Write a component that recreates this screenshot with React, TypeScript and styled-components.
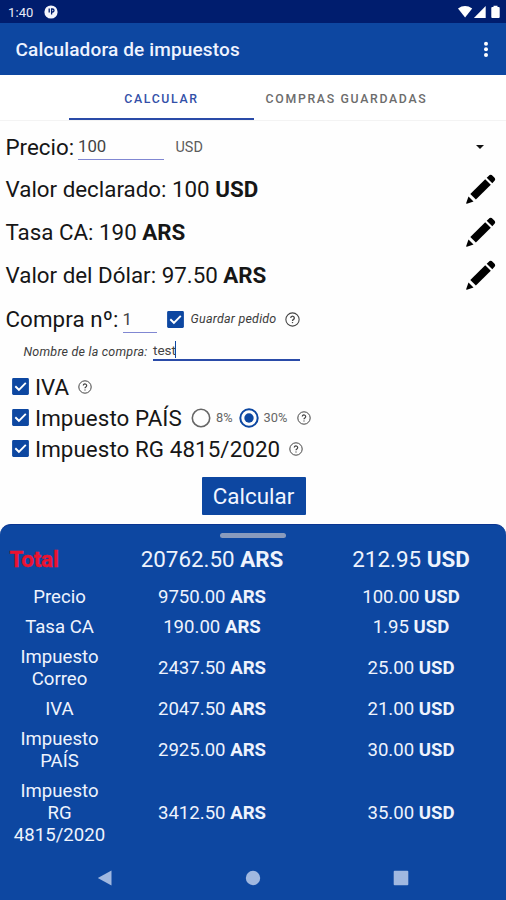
import React from "react";
import styled, { createGlobalStyle } from "styled-components";

const BLUE = "#0d47a1";

const GlobalStyle = createGlobalStyle`
  *, *::before, *::after { box-sizing: border-box; }
  html, body { margin: 0; padding: 0; background: #fff; }
  body { font-family: Roboto, "Liberation Sans", sans-serif; color: #161616; }
  svg { display: block; flex: none; }
`;

const Screen = styled.div`
  width: 506px;
  height: 900px;
  display: flex;
  flex-direction: column;
  overflow: hidden;
  background: #fefefe;
`;

const StatusBar = styled.header`
  height: 23px;
  flex: none;
  padding: 1px 5px 0 8px;
  display: flex;
  align-items: center;
  background: #001d6e;
  color: #e8ebf6;
  font-size: 13px;
`;

const Clock = styled.span`
  width: 36px;
  letter-spacing: 0.1px;
`;

const StatusIcons = styled.div`
  margin-left: auto;
  display: flex;
  align-items: center;
`;

const AppBar = styled.div`
  height: 52px;
  flex: none;
  padding: 1px 13px 0 15.5px;
  display: flex;
  align-items: center;
  justify-content: space-between;
  background: ${BLUE};
  color: #eef3ff;
`;

const Title = styled.h1`
  margin: 0;
  font-size: 19px;
  font-weight: 500;
  letter-spacing: 0.15px;
`;

const Tabs = styled.nav`
  height: 46px;
  flex: none;
  padding-left: 69px;
  display: flex;
  background: #fff;
  border-bottom: 1px solid #f3f3f3;
`;

const Tab = styled.div<{ $active?: boolean }>`
  width: 185px;
  height: 45px;
  display: flex;
  align-items: center;
  justify-content: center;
  padding-top: ${(p) => (p.$active ? 4 : 2)}px;
  border-bottom: ${(p) => (p.$active ? "2px solid #2a4ba8" : "none")};
  color: ${(p) => (p.$active ? "#3350a8" : "#6c6c6c")};
  font-size: 12.3px;
  font-weight: 500;
  letter-spacing: 1.68px;
  white-space: nowrap;
`;

const Form = styled.main`
  height: 403px;
  flex: none;
  padding: 5px 10px 0 5.5px;
  display: flex;
  flex-direction: column;
`;

const Row = styled.div<{ $height: number; $indent?: number }>`
  height: ${(p) => p.$height}px;
  flex: none;
  padding-left: ${(p) => p.$indent ?? 0}px;
  display: flex;
  align-items: center;
`;

const TaxOptions = styled.div`
  margin-top: 10px;
`;

const Label = styled.span<{ $width?: number; $spacing?: number }>`
  width: ${(p) => (p.$width ? `${p.$width}px` : "auto")};
  flex: none;
  font-size: 22.35px;
  line-height: 26px;
  letter-spacing: ${(p) => p.$spacing ?? 0}px;
  white-space: nowrap;
  b { font-weight: 700; }
`;

const Field = styled.div<{ $width: number; $focused?: boolean; $height: number }>`
  width: ${(p) => p.$width}px;
  height: ${(p) => p.$height}px;
  display: flex;
  align-items: center;
  color: #444;
  border-bottom: ${(p) => (p.$focused ? "2px solid #2a4ba8" : "1px solid #8087d2")};
`;

const FieldText = styled.span<{ $size: number }>`
  font-size: ${(p) => p.$size}px;
  line-height: 1;
`;

const Caret = styled.i`
  width: 1.5px;
  height: 17px;
  margin: -2px 0 0 -1px;
  background: ${BLUE};
`;

const Currency = styled.span`
  margin-left: 11.5px;
  color: #5c5c5c;
  font-size: 14.4px;
`;

const Trailing = styled.div<{ $right: number }>`
  margin-left: auto;
  margin-right: ${(p) => p.$right}px;
`;

const Note = styled.em<{ $width: number }>`
  width: ${(p) => p.$width}px;
  flex: none;
  color: #3c3c3c;
  font-size: 12.5px;
  letter-spacing: 0.22px;
  line-height: 14px;
  white-space: nowrap;
`;

const Gap = styled.span<{ $size: number }>`
  width: ${(p) => p.$size}px;
  flex: none;
`;

const Percent = styled.span<{ $width: number }>`
  width: ${(p) => p.$width}px;
  color: #666;
  font-size: 12.8px;
`;

const CalcButton = styled.button`
  width: 104px;
  height: 38px;
  margin: 12.5px 0 0 196px;
  padding: 0;
  flex: none;
  border: 0;
  border-radius: 1px;
  background: ${BLUE};
  color: #f2f6ff;
  font: 400 22.4px Roboto, sans-serif;
  letter-spacing: 0;
`;

const Sheet = styled.section`
  flex: 1;
  display: flex;
  flex-direction: column;
  align-items: center;
  border-top: 1px solid #0a3490;
  border-radius: 11px 11px 0 0;
  background: ${BLUE};
  color: #eef3fd;
`;

const Handle = styled.div`
  width: 66px;
  height: 5px;
  margin: 8px 0 -1px;
  flex: none;
  border-radius: 3px;
  background: #899bbd;
`;

const ResultRow = styled.div<{ $height: number; $total?: boolean }>`
  width: 100%;
  height: ${(p) => p.$height}px;
  flex: none;
  display: grid;
  grid-template-columns: 119px 186px 1fr;
  align-items: center;
  text-align: center;
  font-size: ${(p) => (p.$total ? 22.4 : 18.6)}px;
  line-height: 21.8px;
  b { font-weight: 700; }
`;

const Name = styled.div`
  padding: 0 12px;
`;

const TotalName = styled.div`
  padding-left: 9.5px;
  text-align: left;
  color: #ec1230;
  font-weight: 700;
  letter-spacing: -0.2px;
  -webkit-text-stroke: 0.4px #ec1230;
`;

const Dollars = styled.div`
  padding-left: 11px;
`;

const NavBar = styled.footer`
  width: 100%;
  height: 45px;
  margin-top: auto;
  padding: 0 97px;
  display: flex;
  align-items: center;
  justify-content: space-between;
`;

const AppBadge = () => (
  <svg width="14" height="14" viewBox="0 0 14 14">
    <circle cx="7" cy="7" r="6.6" fill="#f4f6fc" />
    <path d="M5.2 3.4v4M7.6 9.4V4h.9a1.500 1.500 0 0 1 0 3H7.600" fill="none" stroke="#001d6e" strokeWidth="1.3" />
  </svg>
);

const StatusGlyphs = () => (
  <svg width="44" height="14" viewBox="0 0 44 14">
    <path d="M1 3.5Q8 -1.3 15.2 3.5L8.1 12.6Z" fill="#fff" />
    <path d="M28.7 1V13H16.9Z" fill="#fff" />
    <path d="M36.5 .7h4v1.3h1.3q.9 0 .9.9v9.2q0 .9-.9.9h-6.600q-.9 0-.9-.9V2.900q0-.9.9-.9h1.300Z" fill="#fff" />
  </svg>
);

const MoreIcon = () => (
  <svg width="14" height="18" viewBox="0 0 14 18" fill="#fff">
    <circle cx="7" cy="2.7" r="2" />
    <circle cx="7" cy="8.3" r="2" />
    <circle cx="7" cy="13.9" r="2" />
  </svg>
);

const ArrowDown = () => (
  <svg width="8" height="4" viewBox="0 0 8 4">
    <path d="M0 0h8L4 4Z" fill="#111" />
  </svg>
);

const Pencil = () => (
  <svg width="30" height="30" viewBox="0 0 30 30" fill="#000">
    <path d="M20.7 3.8 22.6 1.9Q24.7-.3 26.8 1.9L28.1 3.2Q30.3 5.3 28.1 7.3L26.3 9.2Z" />
    <path d="M19.2 5.3 24.8 10.7 9.9 25.5 4.3 20.1Z" />
    <path d="M2.5 22.6 7.5 27.5 .9 29.8Q0 30 .2 29Z" />
  </svg>
);

const Check = () => (
  <svg width="17" height="17" viewBox="0 0 17 17">
    <rect x=".1" y=".1" width="16.8" height="16.8" rx="1.3" fill={BLUE} />
    <path d="M3.3 8.3 6.9 11.8 13.8 4.9" fill="none" stroke="#fff" strokeWidth="1.9" />
  </svg>
);

const Help = ({ size = 14 }: { size?: number }) => (
  <svg width={size} height={size} viewBox="0 0 14 14" fill="none" stroke="#444">
    <circle cx="7" cy="7" r="6.2" strokeWidth="1" />
    <path d="M5.300 5.500A1.700 1.600 0 1 1 7.900 6.900Q7 7.500 7 8.300" strokeWidth="1.200" />
    <path d="M7 9.400v1" strokeWidth="1.200" />
  </svg>
);

const Radio = ({ on = false }: { on?: boolean }) => (
  <svg width="20" height="20" viewBox="0 0 20 20" fill="none">
    <circle cx="10" cy="10" r="8.700" stroke={on ? BLUE : "#666"} strokeWidth={on ? 2 : 1.6} />
    {on && <circle cx="10" cy="10" r="4.7" fill={BLUE} />}
  </svg>
);

const values = [
  { label: "Valor declarado:", amount: "100", unit: "USD" },
  { label: "Tasa CA:", amount: "190", unit: "ARS" },
  { label: "Valor del Dólar:", amount: "97.50", unit: "ARS" },
];

const results = [
  { name: "Precio", ars: "9750.00", usd: "100.00", height: 30 },
  { name: "Tasa CA", ars: "190.00", usd: "1.95", height: 30 },
  { name: "Impuesto Correo", ars: "2437.50", usd: "25.00", height: 52 },
  { name: "IVA", ars: "2047.50", usd: "21.00", height: 30 },
  { name: "Impuesto PAÍS", ars: "2925.00", usd: "30.00", height: 52 },
  { name: "Impuesto RG 4815/2020", ars: "3412.50", usd: "35.00", height: 74 },
];

export default function App() {
  return (
    <>
      <GlobalStyle />
      <Screen>
        <StatusBar>
          <Clock>1:40</Clock>
          <AppBadge />
          <StatusIcons>
            <StatusGlyphs />
          </StatusIcons>
        </StatusBar>
        <AppBar>
          <Title>Calculadora de impuestos</Title>
          <MoreIcon />
        </AppBar>
        <Tabs>
          <Tab $active>CALCULAR</Tab>
          <Tab>COMPRAS GUARDADAS</Tab>
        </Tabs>

        <Form>
          <Row $height={42}>
            <Label $width={72.5}>Precio:</Label>
            <Field $width={86} $height={26}>
              <FieldText $size={16.8}>100</FieldText>
            </Field>
            <Currency>USD</Currency>
            <Trailing $right={12}>
              <ArrowDown />
            </Trailing>
          </Row>
          {values.map((v) => (
            <Row key={v.label} $height={42.8}>
              <Label>
                {v.label} {v.amount} <b>{v.unit}</b>
              </Label>
              <Trailing $right={0}>
                <Pencil />
              </Trailing>
            </Row>
          ))}
          <Row $height={46.1}>
            <Label $width={117} $spacing={0.08}>Compra nº:</Label>
            <Field $width={34} $height={28}>
              <FieldText $size={16.8}>1</FieldText>
            </Field>
            <Gap $size={10.5} />
            <Check />
            <Gap $size={6.5} />
            <Note $width={94.5}>Guardar pedido</Note>
            <Help size={15} />
          </Row>
          <Row $height={19} $indent={18}>
            <Note $width={129.5}>Nombre de la compra:</Note>
            <Field $width={147} $height={19} $focused>
              <FieldText $size={13.5}>test</FieldText>
              <Caret />
            </Field>
          </Row>
          <TaxOptions>
            <Row $height={31} $indent={6}>
              <Check />
              <Gap $size={6.5} />
              <Label $width={42.5}>IVA</Label>
              <Help />
            </Row>
            <Row $height={31} $indent={6}>
              <Check />
              <Gap $size={6.5} />
              <Label $width={156} $spacing={0.08}>Impuesto PAÍS</Label>
              <Radio />
              <Gap $size={5} />
              <Percent $width={22.5}>8%</Percent>
              <Radio on />
              <Gap $size={5} />
              <Percent $width={33}>30%</Percent>
              <Help />
            </Row>
            <Row $height={31} $indent={6}>
              <Check />
              <Gap $size={6.5} />
              <Label $width={253.5} $spacing={0.08}>Impuesto RG 4815/2020</Label>
              <Help />
            </Row>
          </TaxOptions>
          <CalcButton>Calcular</CalcButton>
        </Form>

        <Sheet>
          <Handle />
          <ResultRow $height={46} $total>
            <TotalName>Total</TotalName>
            <div>
              20762.50 <b>ARS</b>
            </div>
            <Dollars>
              212.95 <b>USD</b>
            </Dollars>
          </ResultRow>
          {results.map((r) => (
            <ResultRow key={r.name} $height={r.height}>
              <Name>{r.name}</Name>
              <div>
                {r.ars} <b>ARS</b>
              </div>
              <Dollars>
                {r.usd} <b>USD</b>
              </Dollars>
            </ResultRow>
          ))}
          <NavBar>
            <svg width="15" height="16" viewBox="0 0 15 16">
              <path d="M14.5 .5v15L.8 8Z" fill="#a0b8e0" />
            </svg>
            <svg width="16" height="16" viewBox="0 0 16 16">
              <circle cx="8" cy="8" r="7.2" fill="#a0b8e0" />
            </svg>
            <svg width="16" height="16" viewBox="0 0 16 16">
              <rect x=".7" y=".7" width="14.6" height="14.6" rx="1" fill="#a0b8e0" />
            </svg>
          </NavBar>
        </Sheet>
      </Screen>
    </>
  );
}
